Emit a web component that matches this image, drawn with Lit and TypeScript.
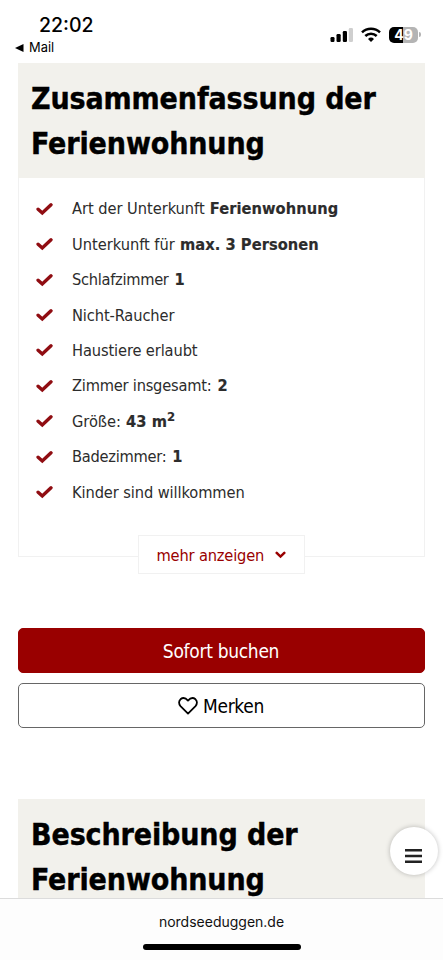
import { LitElement, html, css, svg } from "lit";
import { customElement } from "lit/decorators.js";

interface Feature {
  label: string;
  tracking: number;
  value?: string;
  sup?: string;
}

const FEATURES: Feature[] = [
  { label: "Art der Unterkunft", tracking: -0.04, value: "Ferienwohnung" },
  { label: "Unterkunft für", tracking: -0.02, value: "max. 3 Personen" },
  { label: "Schlafzimmer", tracking: -0.3, value: "1" },
  { label: "Nicht-Raucher", tracking: -0.12 },
  { label: "Haustiere erlaubt", tracking: -0.12 },
  { label: "Zimmer insgesamt:", tracking: -0.22, value: "2" },
  { label: "Größe:", tracking: -0.05, value: "43 m", sup: "2" },
  { label: "Badezimmer:", tracking: -0.27, value: "1" },
  { label: "Kinder sind willkommen", tracking: -0.1 },
];

@customElement("status-bar")
class StatusBar extends LitElement {
  static styles = css`
    :host { display: flex; justify-content: space-between; height: 63px; box-sizing: border-box; font-family: Inter, sans-serif; color: #000; }
    .left { padding: 13px 0 0 15px; }
    .time { font-size: 19.5px; line-height: 24px; font-weight: 500; padding-left: 24px; }
    .back { display: flex; align-items: center; gap: 5px; font-size: 12.9px; line-height: 22px; font-weight: 400; }
    .right { display: flex; align-items: flex-start; padding: 27px 22px 0 0; }
    .signal { margin-right: 8px; }
    .wifi { margin-right: 8px; }
    .battery { display: flex; align-items: center; justify-content: center; width: 29px; height: 16px; border-radius: 5px; background: linear-gradient(90deg, #000 50%, #b4b4b4 50%); color: #fff; font-size: 14px; font-weight: 700; line-height: 16px; }
    .cap { width: 2px; height: 5px; border-radius: 0 2px 2px 0; background: #b4b4b4; margin: 5px 0 0 1px; }
  `;
  render() {
    return html`
      <div class="left">
        <div class="time">22:02</div>
        <div class="back">
          <svg width="9" height="8" viewBox="0 0 9 8"><path d="M0 4L8.5 0V8Z" /></svg>Mail
        </div>
      </div>
      <div class="right">
        <svg class="signal" width="23" height="16" viewBox="0 0 23 16">
          <rect x="0.5" y="10" width="4" height="5" rx="1.2" />
          <rect x="6.5" y="7" width="4.2" height="8" rx="1.2" />
          <rect x="12.8" y="4" width="4.2" height="11" rx="1.2" />
          <rect x="18.8" y="1" width="4.2" height="14" rx="1.2" fill="#cfcfcf" />
        </svg>
        <svg class="wifi" width="20" height="16" viewBox="0 0 20 16" fill="none" stroke="#000" stroke-width="2.5">
          <path d="M1 5.4A13 13 0 0 1 19 5.4" />
          <path d="M4.3 9A8.2 8.2 0 0 1 15.7 9" />
          <path d="M10 15L7 12A4.3 4.3 0 0 1 13 12Z" fill="#000" stroke="none" />
        </svg>
        <div class="battery">49</div>
        <div class="cap"></div>
      </div>
    `;
  }
}

@customElement("section-heading")
class SectionHeading extends LitElement {
  static styles = css`
    :host { display: block; background: #f2f1ec; box-sizing: border-box; height: 115px; padding: 13px 13px 0; }
    h2 { margin: 0; font: 700 30px/45px "DejaVu Sans Condensed", "DejaVu Sans", sans-serif; font-stretch: condensed; letter-spacing: -0.12px; color: #000; white-space: nowrap; -webkit-text-stroke: 0.4px #000; }
  `;
  render() {
    return html`<h2><slot></slot></h2>`;
  }
}

@customElement("app-root")
class AppRoot extends LitElement {
  static styles = css`
    :host { display: block; position: relative; height: 960px; overflow: hidden; background: #fff; color: #2c2c2c; font: 16.3px/24px "DejaVu Sans Condensed", "DejaVu Sans", sans-serif; font-stretch: condensed; }
    main { padding: 0 18px; }
    .card { box-sizing: border-box; height: 379px; border: 1px solid #f1f1f1; border-top: 0; padding: 13px 18px 0; display: flex; flex-direction: column; }
    ul { list-style: none; margin: 0; padding: 0; }
    li { display: flex; align-items: center; height: 35.45px; }
    .tick { flex: none; width: 17px; height: 14px; margin: 0 19px 0 -1px; }
    .label { white-space: pre; padding-top: 1px; }
    strong { letter-spacing: 0.06px; white-space: pre; margin-left: 0.5px; padding-top: 1px; -webkit-text-stroke: 0.15px; }
    .digit { margin-left: 1.5px; }
    sup { font-size: 13px; line-height: 0; vertical-align: 6px; }
    .more { align-self: center; flex: none; display: flex; align-items: center; gap: 11px; box-sizing: border-box; width: 167px; height: 39px; margin: 25px 1px 0 0; border: 1px solid #f1f1f1; background: #fff; color: #900; padding: 3px 0 0 18px; letter-spacing: -0.17px; }
    .more svg { margin-bottom: 2px; }
    .actions { display: flex; flex-direction: column; gap: 10px; margin: 71px 0; }
    .button { display: flex; align-items: center; justify-content: center; gap: 5px; box-sizing: border-box; height: 45px; border: 1px solid #666; border-radius: 5px; background: #fff; color: #000; font-size: 19px; letter-spacing: -0.35px; padding-right: 1px; }
    .primary { background: #900; border-color: #900; color: #fff; letter-spacing: -0.3px; padding-top: 1px; }
    .fab { position: absolute; left: 389.5px; top: 827px; width: 48px; height: 48px; border-radius: 50%; background: #fff; box-shadow: 0 0 5px rgba(0, 0, 0, 0.25); display: flex; align-items: center; justify-content: center; }
    .fab svg { margin: 9px 1px 0 0; }
    .browser { position: absolute; left: 0; right: 0; bottom: 0; height: 62px; box-sizing: border-box; border-top: 1px solid #dcdcdc; background: #fdfdfd; color: #111; font: 14px/20px Inter, sans-serif; display: flex; flex-direction: column; align-items: center; padding-top: 13px; letter-spacing: 0; }
    .home { width: 158px; height: 6px; border-radius: 3px; background: #000; margin-top: 12px; }
  `;

  private tick() {
    return html`<svg class="tick" viewBox="0 0 17 14">${svg`<path d="M2.1 7.2L6.3 11L15 2.8" fill="none" stroke="#900d12" stroke-width="3.4" stroke-linecap="round" />`}</svg>`;
  }

  render() {
    return html`
      <status-bar></status-bar>
      <main>
        <section-heading>Zusammenfassung der<br />Ferienwohnung</section-heading>
        <section class="card">
          <ul>
            ${FEATURES.map(
              (f) => html`<li>
                ${this.tick()}<span class="label" style="letter-spacing:${f.tracking}px">${f.label}${f.value ? " " : ""}</span>${f.value
                  ? html`<strong class=${f.value.length === 1 ? "digit" : ""}>${f.value}${f.sup ? html`<sup>${f.sup}</sup>` : ""}</strong>`
                  : ""}
              </li>`
            )}
          </ul>
          <div class="more">
            <span>mehr anzeigen</span>
            <svg width="11" height="8" viewBox="0 0 11 8" fill="none" stroke="#900" stroke-width="2.5" stroke-linecap="round"><path d="M1.7 1.9L5.5 5.6L9.3 1.9" /></svg>
          </div>
        </section>
        <div class="actions">
          <div class="button primary">Sofort buchen</div>
          <div class="button">
            <svg width="20" height="18" viewBox="0 0 20 18" fill="none" stroke="#000" stroke-width="1.8" stroke-linejoin="round"><path d="M10 16.6L2.5 9.1C0.6 7 0.6 4 2.5 2.3C4.7 0.5 7.6 0.9 10 3.6C12.4 0.9 15.3 0.5 17.5 2.3C19.4 4 19.4 7 17.5 9.1Z" /></svg>
            <span>Merken</span>
          </div>
        </div>
        <section-heading>Beschreibung der<br />Ferienwohnung</section-heading>
      </main>
      <div class="fab">
        <svg width="17" height="14" viewBox="0 0 17 14" fill="#222"><path d="M0 0H17V2.4H0ZM0 5.8H17V8.2H0ZM0 11.6H17V14H0Z" /></svg>
      </div>
      <footer class="browser">
        <span>nordseeduggen.de</span>
        <div class="home"></div>
      </footer>
    `;
  }
}
